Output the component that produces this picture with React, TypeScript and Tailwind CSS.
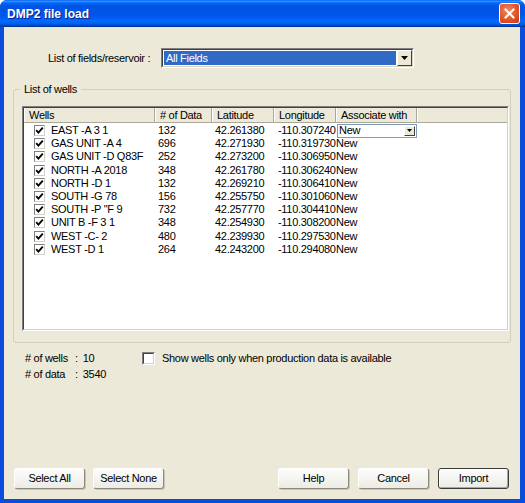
import React from "react";

type Well = [string, string, string, string];

const wells: Well[] = [
  ["EAST -A 3 1", "132", "42.261380", "-110.307240"],
  ["GAS UNIT -A 4", "696", "42.271930", "-110.319730"],
  ["GAS UNIT -D Q83F", "252", "42.273200", "-110.306950"],
  ["NORTH -A 2018", "348", "42.261780", "-110.306240"],
  ["NORTH -D 1", "132", "42.269210", "-110.306410"],
  ["SOUTH -G 78", "156", "42.255750", "-110.301060"],
  ["SOUTH -P \"F 9", "732", "42.257770", "-110.304410"],
  ["UNIT B -F 3 1", "348", "42.254930", "-110.308200"],
  ["WEST -C- 2", "480", "42.239930", "-110.297530"],
  ["WEST -D 1", "264", "42.243200", "-110.294080"],
];

const DownArrow = () => (
  <svg width="7" height="4" viewBox="0 0 7 4">
    <path d="M0 0h7L3.5 4z" fill="#000" />
  </svg>
);

const Sunken = ({ className, children }: { className: string; children?: React.ReactNode }) => (
  <div className={`border border-t-[#808080] border-l-[#808080] border-r-white border-b-white ${className}`}>
    <div className="w-full h-full border border-t-[#404040] border-l-[#404040] border-r-[#d4d0c8] border-b-[#d4d0c8] bg-white">
      {children}
    </div>
  </div>
);

const RowCheck = () => (
  <div className="w-[11px] h-[11px] shrink-0 bg-white border border-t-[#808080] border-l-[#808080] border-r-[#d4d0c8] border-b-[#d4d0c8] flex items-center justify-center">
    <svg width="9" height="9" viewBox="0 0 9 9">
      <path d="M1.2 4.2 3.4 6.6 7.8 1.6" stroke="#000" strokeWidth="1.8" fill="none" />
    </svg>
  </div>
);

const Button = ({ label, isDefault }: { label: string; isDefault?: boolean }) => (
  <button
    className={`w-[71px] h-[21px] rounded-[3px] text-[11px] tracking-[-0.3px] text-black bg-[linear-gradient(#fdfdfb,#ecebe5)] ${
      isDefault
        ? "border border-[#3a3a3a] shadow-[inset_1px_1px_0_#fff,inset_-1px_-1px_0_#aca899]"
        : "border border-t-white border-l-white border-r-[#8e8b7d] border-b-[#8e8b7d] shadow-[1px_1px_0_#c9c6b8]"
    }`}
  >
    {label}
  </button>
);

const headerCell = "h-full flex items-center pl-[5px] border-r border-[#aca899] shadow-[inset_1px_0_0_#fff] shrink-0";

export default function App() {
  return (
    <div className="w-[525px] h-[503px] flex flex-col bg-[#0a4ddc] rounded-t-[7px] overflow-hidden font-['Liberation_Sans',Tahoma,sans-serif] text-[11px] tracking-[-0.3px] text-black">
      {/* title bar */}
      <div className="h-[27px] shrink-0 flex items-center justify-between pl-[7px] pr-[5px] bg-[linear-gradient(#0058ee_0%,#3593ff_4%,#288eff_6%,#127dff_8%,#036ffc_10%,#0262ee_14%,#0057e5_20%,#0054e3_24%,#0055eb_56%,#005bf5_66%,#026afe_76%,#0062ef_86%,#0052d6_92%,#0040ab_96%,#003092_100%)]">
        <span className="text-white font-bold text-[12px] tracking-normal [text-shadow:1px_1px_0_#0a1e8c] pt-[1px]">DMP2 file load</span>
        <div className="w-[21px] h-[21px] rounded-[3px] border border-white bg-[radial-gradient(circle_at_40%_35%,#f08a62,#e0542a_55%,#c03a10)] flex items-center justify-center">
          <svg width="11" height="11" viewBox="0 0 11 11">
            <path d="M1.5 1.5l8 8M9.5 1.5l-8 8" stroke="#fff" strokeWidth="2" strokeLinecap="square" />
          </svg>
        </div>
      </div>

      {/* body */}
      <div className="flex-1 ml-[4px] mr-[5px] mb-[4px] bg-[#ece9d8] flex flex-col pt-[21px]">
        <div className="flex items-center h-[20px] pl-[44px]">
          <span className="w-[113px] shrink-0">List of fields/reservoir :</span>
          <Sunken className="w-[253px] h-[20px]">
            <div className="flex h-full">
              <div className="flex-1 m-[1px] bg-[#316ac5] text-white flex items-center pl-[2px]">All Fields</div>
              <div className="w-[15px] h-full bg-[#ece9d8] border border-t-white border-l-white border-r-[#404040] border-b-[#404040] flex items-center justify-center">
                <DownArrow />
              </div>
            </div>
          </Sunken>
        </div>

        {/* group box */}
        <div className="relative mx-[9px] mt-[21px] h-[254px] border border-[#d0d0bf] rounded-[3px] pt-[16px] pl-[8px] pr-[1px] pb-[11px]">
          <span className="absolute left-[6px] top-[-8px] px-[4px] bg-[#ece9d8] leading-[14px]">List of wells</span>
          <Sunken className="h-full w-full">
            <div className="h-[15px] flex bg-[#ece9d8] border-b border-[#aca899]">
              <div className={`${headerCell} w-[131px]`}>Wells</div>
              <div className={`${headerCell} w-[57px]`}># of Data</div>
              <div className={`${headerCell} w-[62px]`}>Latitude</div>
              <div className={`${headerCell} w-[62px]`}>Longitude</div>
              <div className={`${headerCell} w-[81px]`}>Associate with</div>
              <div className="flex-1 shadow-[inset_1px_0_0_#fff]" />
            </div>
            <div className="pt-[1px]">
              {wells.map((w, i) => (
                <div key={w[0]} className="flex h-[13.2px] items-center whitespace-nowrap leading-[13px]">
                  <div className="w-[131px] shrink-0 flex items-center pl-[10px] gap-[6px]">
                    <RowCheck />
                    <span>{w[0]}</span>
                  </div>
                  <div className="w-[57px] shrink-0 pl-[3px]">{w[1]}</div>
                  <div className="w-[62px] shrink-0 pl-[3px] overflow-hidden">{w[2]}</div>
                  <div className="w-[62px] shrink-0 pl-[4px] overflow-hidden">{w[3]}</div>
                  {i === 0 ? (
                    <div className="w-[80px] h-[14px] shrink-0 ml-[1px] bg-white border border-[#7f9db9] flex items-center justify-between pl-[1px] pr-[1px]">
                      <span>New</span>
                      <div className="w-[11px] h-[10px] bg-[#ece9d8] border border-t-white border-l-white border-r-[#404040] border-b-[#404040] flex items-center justify-center">
                        <svg width="5" height="3" viewBox="0 0 5 3">
                          <path d="M0 0h5L2.5 3z" fill="#000" />
                        </svg>
                      </div>
                    </div>
                  ) : (
                    <div className="w-[81px] shrink-0">New</div>
                  )}
                </div>
              ))}
            </div>
          </Sunken>
        </div>

        {/* stats + option */}
        <div className="flex pl-[21px] mt-[7px]">
          <div className="w-[117px] shrink-0">
            <div className="h-[16px] flex items-center">
              <span className="w-[50px]"># of wells</span>
              <span>:</span>
              <span className="ml-[5px]">10</span>
            </div>
            <div className="h-[16px] flex items-center">
              <span className="w-[50px]"># of data</span>
              <span>:</span>
              <span className="ml-[5px]">3540</span>
            </div>
          </div>
          <div className="h-[16px] flex items-center gap-[7px]">
            <Sunken className="w-[13px] h-[13px]" />
            <span>Show wells only when production data is available</span>
          </div>
        </div>

        <div className="flex-1" />

        {/* buttons */}
        <div className="flex items-center pl-[10px] pr-[11px] mb-[10px]">
          <div className="flex gap-[8px]">
            <Button label="Select All" />
            <Button label="Select None" />
          </div>
          <div className="flex-1" />
          <div className="flex gap-[9px]">
            <Button label="Help" />
            <Button label="Cancel" />
            <Button label="Import" isDefault />
          </div>
        </div>
      </div>
    </div>
  );
}
